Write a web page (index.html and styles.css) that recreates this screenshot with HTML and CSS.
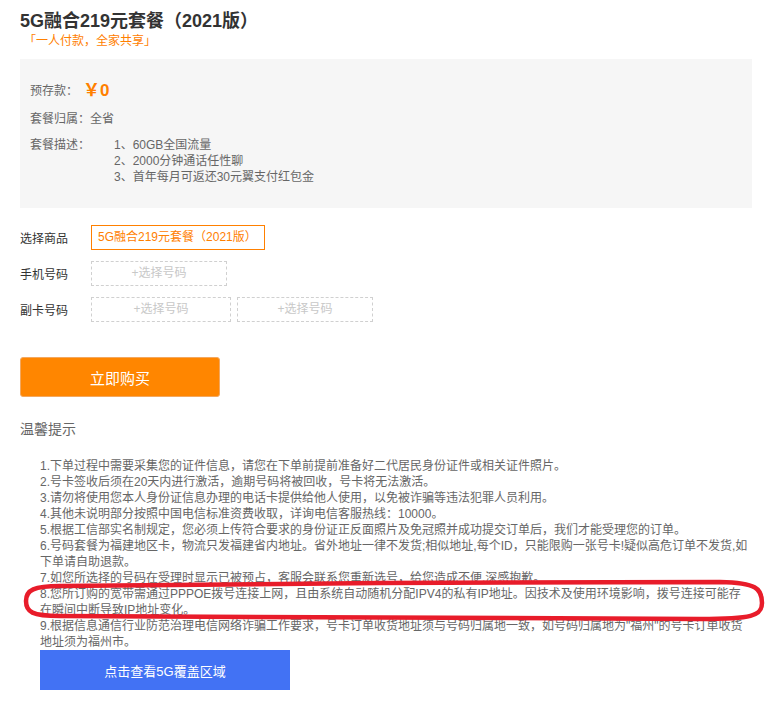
FILE: index.html
```html
<!DOCTYPE html>
<html lang="zh-CN">
<head>
  <meta charset="UTF-8">
  <title>5G融合219元套餐（2021版）</title>
  <link rel="stylesheet" href="styles.css">
</head>
<body>

  <div class="page">
    <h1 class="title">5G融合219元套餐（2021版）</h1>
    <div class="slogan">「一人付款，全家共享」</div>

    <div class="info">
      <div class="info-row price-row">
        <span class="info-label">预存款：</span>
        <span class="price">￥0</span>
      </div>
      <div class="info-row">套餐归属：全省</div>
      <div class="info-row desc-row">
        <span class="desc-label">套餐描述：</span>
        <ul class="desc-list">
          <li>1、60GB全国流量</li>
          <li>2、2000分钟通话任性聊</li>
          <li>3、首年每月可返还30元翼支付红包金</li>
        </ul>
      </div>
    </div>

    <div class="form">
      <div class="form-row">
        <span class="form-label">选择商品</span>
        <span class="goods">5G融合219元套餐（2021版）</span>
      </div>
      <div class="form-row">
        <span class="form-label">手机号码</span>
        <span class="pick">+选择号码</span>
      </div>
      <div class="form-row">
        <span class="form-label">副卡号码</span>
        <span class="pick pick-wide">+选择号码</span>
        <span class="pick">+选择号码</span>
      </div>
    </div>

    <button class="buy">立即购买</button>

    <div class="tips-title">温馨提示</div>
    <ol class="tips">
      <li>1.下单过程中需要采集您的证件信息，请您在下单前提前准备好二代居民身份证件或相关证件照片。</li>
      <li>2.号卡签收后须在20天内进行激活，逾期号码将被回收，号卡将无法激活。</li>
      <li>3.请勿将使用您本人身份证信息办理的电话卡提供给他人使用，以免被诈骗等违法犯罪人员利用。</li>
      <li>4.其他未说明部分按照中国电信标准资费收取，详询电信客服热线：10000。</li>
      <li>5.根据工信部实名制规定，您必须上传符合要求的身份证正反面照片及免冠照并成功提交订单后，我们才能受理您的订单。</li>
      <li>6.号码套餐为福建地区卡，物流只发福建省内地址。省外地址一律不发货;相似地址,每个ID，只能限购一张号卡!疑似高危订单不发货,如下单请自助退款。</li>
      <li>7.如您所选择的号码在受理时显示已被预占，客服会联系您重新选号，给您造成不便,深感抱歉。</li>
      <li>8.您所订购的宽带需通过PPPOE拨号连接上网，且由系统自动随机分配IPV4的私有IP地址。因技术及使用环境影响，拨号连接可能存在瞬间中断导致IP地址变化。</li>
      <li>9.根据信息通信行业防范治理电信网络诈骗工作要求，号卡订单收货地址须与号码归属地一致，如号码归属地为"福州"的号卡订单收货地址须为福州市。</li>
    </ol>
    <button class="area">点击查看5G覆盖区域</button>
  </div>

  <!-- hand-drawn highlight around tip 8 -->
  <svg class="mark" width="766" height="715" viewBox="0 0 766 715">
    <path d="M60 586 C34 586 26 590 26 601 C26 612 32 616 60 616 L700 619 C752 619 762 616 762 603 C762 588 756 583 720 582 L380 583 Z"
          fill="none" stroke="#e81c2a" stroke-width="4.5" stroke-linejoin="round"/>
  </svg>

</body>
</html>
```

FILE: styles.css
```css
body {
  margin: 0;
  background: #fff;
  font-family: "Liberation Sans", Arial, "Noto Sans CJK SC", sans-serif;
  color: #333;
  position: relative;
}

.page {
  width: 732px;
  padding: 9px 0 0 20px;
}

.title {
  margin: 0;
  font-size: 18px;
  line-height: 24px;
  font-weight: bold;
  color: #333;
}

.slogan {
  margin-left: 4px;
  font-size: 12px;
  line-height: 16px;
  color: #ff8000;
}

.info {
  margin-top: 10px;
  background: #f6f6f6;
  padding: 20px 10px 23px;
  font-size: 12px;
  color: #666;
}

.info-row {
  line-height: 20px;
  margin-bottom: 8px;
}

.price-row {
  display: flex;
  align-items: center;
  height: 24px;
  margin-bottom: 6px;
}

.price {
  margin-left: 5px;
  font-size: 17px;
  font-weight: bold;
  color: #ff8000;
}

.desc-row {
  display: flex;
  line-height: 16px;
  margin-bottom: 0;
}

.desc-label {
  width: 84px;
  flex-shrink: 0;
}

.desc-list {
  list-style: none;
  margin: 0;
  padding: 0;
}

.form {
  margin-top: 17px;
}

.form-row {
  display: flex;
  align-items: center;
  gap: 6px;
  margin-bottom: 11px;
  font-size: 12px;
}

.form-label {
  width: 65px;
  color: #333;
}

.goods {
  height: 23px;
  line-height: 23px;
  padding: 0 7px 0 6px;
  border: 1px solid #ff8000;
  color: #ff8000;
}

.pick {
  width: 134px;
  height: 23px;
  line-height: 23px;
  border: 1px dashed #d0d0d0;
  color: #c8c8c8;
  text-align: center;
}

.pick-wide {
  width: 138px;
}

.buy {
  display: block;
  margin-top: 35px;
  width: 200px;
  height: 40px;
  border: 1px solid #f3a860;
  border-radius: 3px;
  background: #ff8600;
  color: #fff;
  font-family: inherit;
  font-size: 15px;
}

.tips-title {
  margin-top: 22px;
  font-size: 14px;
  line-height: 20px;
  color: #666;
}

.tips {
  list-style: none;
  margin: 19px 0 0;
  padding: 0 0 0 20px;
  font-size: 12px;
  line-height: 16px;
  color: #666;
}

.area {
  display: block;
  margin-left: 20px;
  width: 250px;
  height: 40px;
  border: none;
  background: #4272f4;
  color: #fff;
  font-family: inherit;
  font-size: 13px;
}

.mark {
  position: absolute;
  left: 0;
  top: 0;
  pointer-events: none;
}
```
